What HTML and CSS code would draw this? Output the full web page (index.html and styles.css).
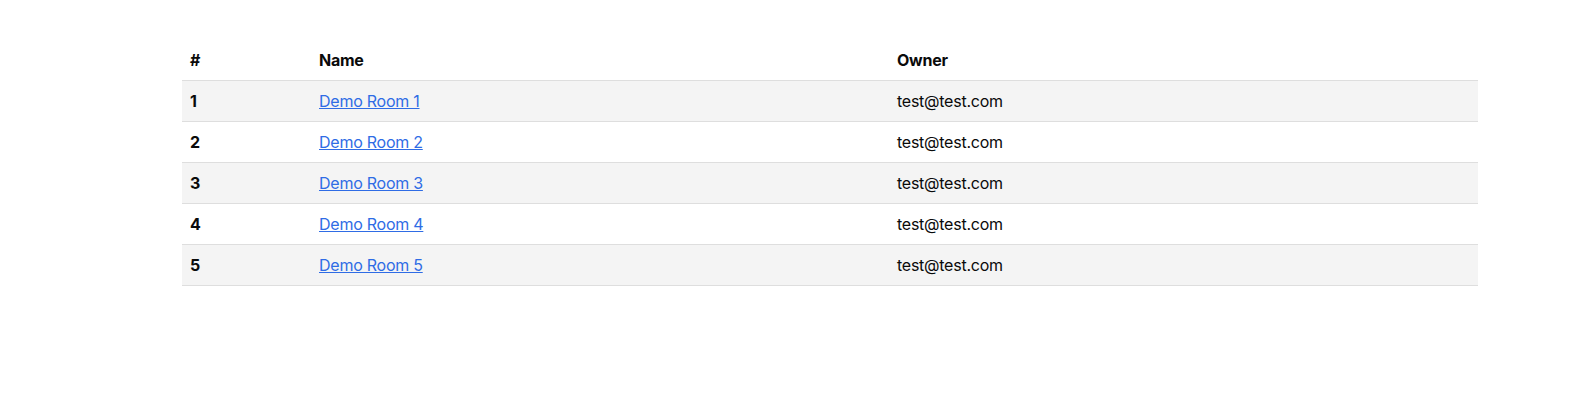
FILE: index.html
```html
<!DOCTYPE html>
<html lang="en">
<head>
<meta charset="utf-8">
<title>Rooms</title>
<link rel="stylesheet" href="styles.css">
</head>
<body>
<main class="page">
  <table class="rooms">
    <thead>
      <tr><th class="col-num">#</th><th class="col-name">Name</th><th class="col-owner">Owner</th></tr>
    </thead>
    <tbody>
      <tr><th>1</th><td><a href="#">Demo Room 1</a></td><td>test@test.com</td></tr>
      <tr><th>2</th><td><a href="#">Demo Room 2</a></td><td>test@test.com</td></tr>
      <tr><th>3</th><td><a href="#">Demo Room 3</a></td><td>test@test.com</td></tr>
      <tr><th>4</th><td><a href="#">Demo Room 4</a></td><td>test@test.com</td></tr>
      <tr><th>5</th><td><a href="#">Demo Room 5</a></td><td>test@test.com</td></tr>
    </tbody>
  </table>
</main>
</body>
</html>
```

FILE: styles.css
```css
html, body {
  margin: 0;
  padding: 0;
  background: #fff;
}
body {
  font-family: Inter, "Noto Sans", sans-serif;
  font-size: 16px;
  letter-spacing: -0.25px;
  color: #0a0a0a;
}
.page {
  padding: 40px 105px 0 182px;
}
.rooms {
  width: 100%;
  border-collapse: collapse;
  table-layout: fixed;
}
.rooms th,
.rooms td {
  padding: 8px;
  line-height: 24px;
  text-align: left;
  border-bottom: 1px solid #dedede;
}
.rooms th {
  font-weight: 700;
}
.col-num { width: 113px; }
.col-name { width: 562px; }
.rooms tbody tr:nth-child(odd) {
  background: #f4f4f4;
}
.rooms a {
  color: #2f6ce5;
  text-decoration: underline;
}
```
